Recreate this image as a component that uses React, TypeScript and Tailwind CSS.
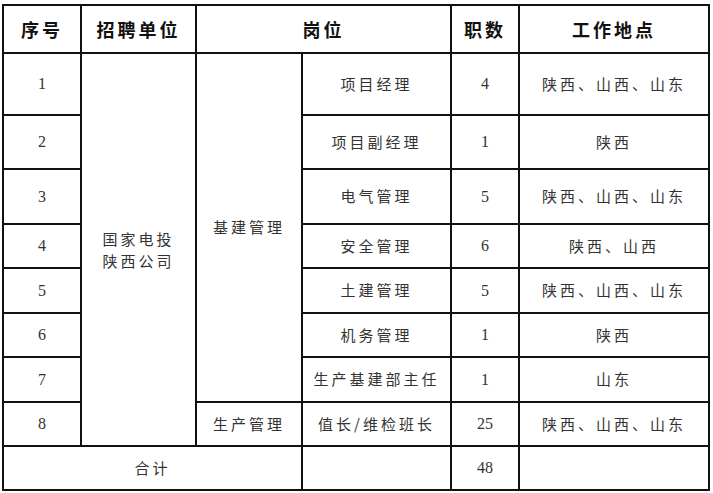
import React from 'react'

const rows = [
  { no: '1', post: '项目经理', count: '4', place: '陕西、山西、山东', h: 'h-[62px]' },
  { no: '2', post: '项目副经理', count: '1', place: '陕西', h: 'h-[54px]' },
  { no: '3', post: '电气管理', count: '5', place: '陕西、山西、山东', h: 'h-[55px]' },
  { no: '4', post: '安全管理', count: '6', place: '陕西、山西', h: 'h-[44px]' },
  { no: '5', post: '土建管理', count: '5', place: '陕西、山西、山东', h: 'h-[45px]' },
  { no: '6', post: '机务管理', count: '1', place: '陕西', h: 'h-[44px]' },
  { no: '7', post: '生产基建部主任', count: '1', place: '山东', h: 'h-[45px]' },
]

const cell = 'border-2 border-[#111] text-center align-middle p-0'
const body = 'text-[15px] text-[#333] tracking-[3px]'
const num = "font-['Liberation_Serif',serif] text-[16px] text-[#333]"

export default function App() {
  return (
    <div className="w-[713px] h-[493px] bg-white pt-[4px] pl-[2px] font-['Noto_Sans_CJK_SC',sans-serif]">
      <table className="table-fixed border-collapse w-[708px]">
        <colgroup>
          <col className="w-[78px]" />
          <col className="w-[115px]" />
          <col className="w-[106px]" />
          <col className="w-[149px]" />
          <col className="w-[68px]" />
          <col className="w-[190px]" />
        </colgroup>
        <thead>
          <tr className="h-[48px] text-[18px] text-[#111] font-medium tracking-[3px]">
            <th className={cell}>序号</th>
            <th className={cell}>招聘单位</th>
            <th className={cell} colSpan={2}>岗位</th>
            <th className={cell}>职数</th>
            <th className={cell}>工作地点</th>
          </tr>
        </thead>
        <tbody>
          {rows.map((r, i) => (
            <tr key={r.no} className={r.h}>
              <td className={`${cell} ${num}`}>{r.no}</td>
              {i === 0 && (
                <td className={`${cell} ${body} leading-[22px]`} rowSpan={8}>
                  国家电投
                  <br />
                  陕西公司
                </td>
              )}
              {i === 0 && (
                <td className={`${cell} ${body}`} rowSpan={7}>
                  基建管理
                </td>
              )}
              <td className={`${cell} ${body}`}>{r.post}</td>
              <td className={`${cell} ${num}`}>{r.count}</td>
              <td className={`${cell} ${body}`}>{r.place}</td>
            </tr>
          ))}
          <tr className="h-[44px]">
            <td className={`${cell} ${num}`}>8</td>
            <td className={`${cell} ${body}`}>生产管理</td>
            <td className={`${cell} ${body}`}>值长/维检班长</td>
            <td className={`${cell} ${num}`}>25</td>
            <td className={`${cell} ${body}`}>陕西、山西、山东</td>
          </tr>
          <tr className="h-[44px]">
            <td className={`${cell} ${body}`} colSpan={3}>
              合计
            </td>
            <td className={cell}></td>
            <td className={`${cell} ${num}`}>48</td>
            <td className={cell}></td>
          </tr>
        </tbody>
      </table>
    </div>
  )
}
